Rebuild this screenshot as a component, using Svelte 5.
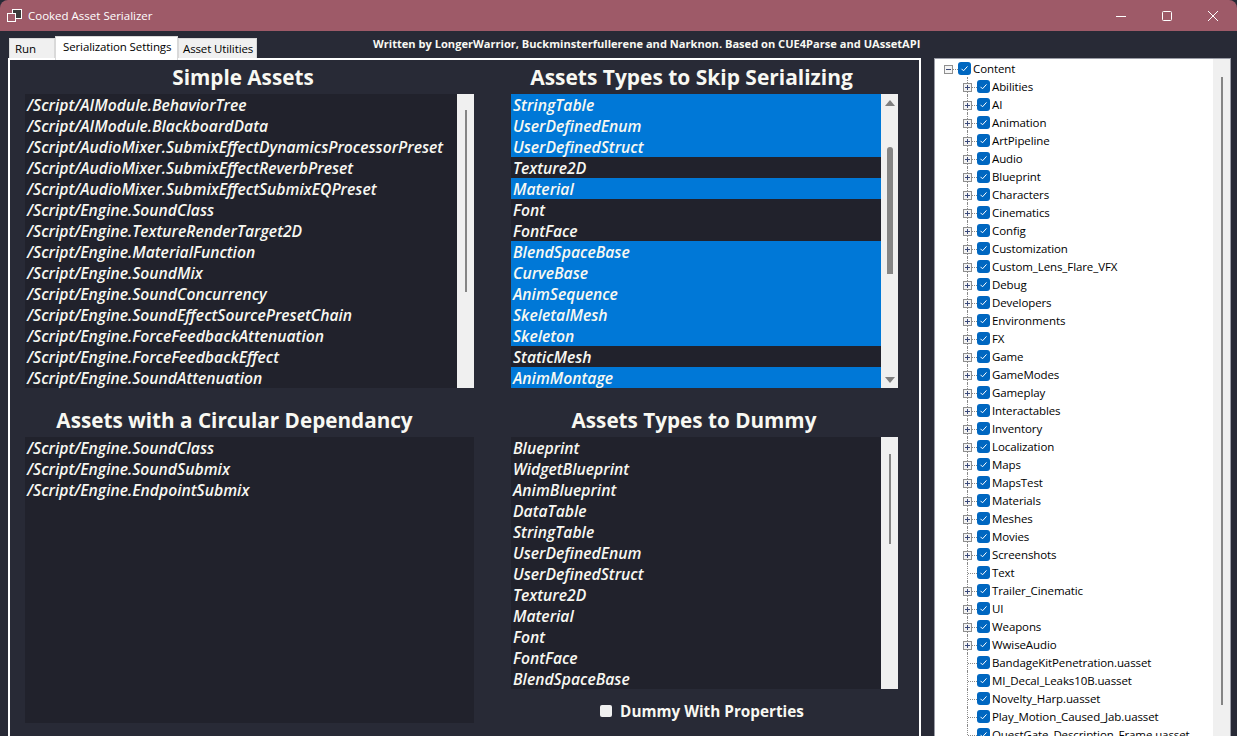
<script>
  const simple = [
    "/Script/AIModule.BehaviorTree",
    "/Script/AIModule.BlackboardData",
    "/Script/AudioMixer.SubmixEffectDynamicsProcessorPreset",
    "/Script/AudioMixer.SubmixEffectReverbPreset",
    "/Script/AudioMixer.SubmixEffectSubmixEQPreset",
    "/Script/Engine.SoundClass",
    "/Script/Engine.TextureRenderTarget2D",
    "/Script/Engine.MaterialFunction",
    "/Script/Engine.SoundMix",
    "/Script/Engine.SoundConcurrency",
    "/Script/Engine.SoundEffectSourcePresetChain",
    "/Script/Engine.ForceFeedbackAttenuation",
    "/Script/Engine.ForceFeedbackEffect",
    "/Script/Engine.SoundAttenuation"
  ];
  const circular = ["/Script/Engine.SoundClass", "/Script/Engine.SoundSubmix", "/Script/Engine.EndpointSubmix"];
  const skip = [
    ["StringTable", true],
    ["UserDefinedEnum", true],
    ["UserDefinedStruct", true],
    ["Texture2D", false],
    ["Material", true],
    ["Font", false],
    ["FontFace", false],
    ["BlendSpaceBase", true],
    ["CurveBase", true],
    ["AnimSequence", true],
    ["SkeletalMesh", true],
    ["Skeleton", true],
    ["StaticMesh", false],
    ["AnimMontage", true]
  ];
  const dummy = [
    "Blueprint", "WidgetBlueprint", "AnimBlueprint", "DataTable", "StringTable", "UserDefinedEnum",
    "UserDefinedStruct", "Texture2D", "Material", "Font", "FontFace", "BlendSpaceBase"
  ];
  const folders = [
    "Abilities", "AI", "Animation", "ArtPipeline", "Audio", "Blueprint", "Characters", "Cinematics", "Config",
    "Customization", "Custom_Lens_Flare_VFX", "Debug", "Developers", "Environments", "FX", "Game", "GameModes",
    "Gameplay", "Interactables", "Inventory", "Localization", "Maps", "MapsTest", "Materials", "Meshes", "Movies",
    "Screenshots", "Text", "Trailer_Cinematic", "UI", "Weapons", "WwiseAudio"
  ];
  const files = [
    "BandageKitPenetration.uasset", "MI_Decal_Leaks10B.uasset", "Novelty_Harp.uasset",
    "Play_Motion_Caused_Jab.uasset", "QuestGate_Description_Frame.uasset"
  ];
  const leaves = ["Text"];
</script>

<div class="window">
  <header class="titlebar">
    <svg class="app-icon" width="16" height="14" viewBox="0 0 16 14" fill="none" stroke="#fff" stroke-width="1">
      <rect x="6.5" y="0.5" width="9" height="9" fill="#3a3a3a" />
      <rect x="1.5" y="4.5" width="8" height="8" fill="#9e5a68" />
    </svg>
    <span class="app-title">Cooked Asset Serializer</span>
    <div class="controls">
      <svg width="12" height="12" viewBox="0 0 12 12" stroke="#fff" fill="none"><path d="M1 6.5h10" /></svg>
      <svg width="12" height="12" viewBox="0 0 12 12" stroke="#fff" fill="none"><rect x="1.5" y="1.5" width="9" height="9" rx="1" /></svg>
      <svg width="12" height="12" viewBox="0 0 12 12" stroke="#fff" fill="none"><path d="M1 1l10 10M11 1L1 11" /></svg>
    </div>
  </header>

  <div class="content">
    <div class="main">
      <div class="tabstrip">
        <button class="tab run">Run</button>
        <button class="tab settings active">Serialization Settings</button>
        <button class="tab utilities">Asset Utilities</button>
        <span class="credits">Written by LongerWarrior, Buckminsterfullerene and Narknon. Based on CUE4Parse and UAssetAPI</span>
      </div>

      <div class="panel">
        <section class="col">
          <h2 class="h-simple">Simple Assets</h2>
          <div class="list top">
            <div class="rows">
              {#each simple as item}
                <div class="row">{item}</div>
              {/each}
            </div>
            <div class="scroll"><div class="thumb thin simple-thumb"></div></div>
          </div>
        </section>

        <section class="col">
          <h2 class="h-skip">Assets Types to Skip Serializing</h2>
          <div class="list top">
            <div class="rows">
              {#each skip as [name, selected]}
                <div class="row" class:selected>{name}</div>
              {/each}
            </div>
            <div class="scroll arrows">
              <svg class="arrow" width="10" height="6" viewBox="0 0 10 6"><path d="M5 0l5 6H0z" fill="#7f7f7f" /></svg>
              <div class="thumb wide"></div>
              <svg class="arrow" width="10" height="6" viewBox="0 0 10 6"><path d="M0 0h10L5 6z" fill="#7f7f7f" /></svg>
            </div>
          </div>
        </section>

        <section class="col lower">
          <h2 class="h-circular">Assets with a Circular Dependancy</h2>
          <div class="list circular">
            <div class="rows">
              {#each circular as item}
                <div class="row">{item}</div>
              {/each}
            </div>
          </div>
        </section>

        <section class="col lower">
          <h2 class="h-dummy">Assets Types to Dummy</h2>
          <div class="list dummy">
            <div class="rows">
              {#each dummy as item}
                <div class="row">{item}</div>
              {/each}
            </div>
            <div class="scroll"><div class="thumb thin dummy-thumb"></div></div>
          </div>
          <label class="dummy-check">
            <span class="plain-box"></span>
            Dummy With Properties
          </label>
        </section>
      </div>
    </div>

    <aside class="tree">
      <div class="tree-rows">
        <div class="node root">
          <span class="twist root-twist"><span class="expander">
            <svg width="9" height="9" viewBox="0 0 9 9"><path d="M2 4.5h5" stroke="#3b4a7a" /></svg>
          </span></span>
          <span class="check"><svg width="13" height="13" viewBox="0 0 13 13"><path d="M3.5 6.8l2 2 4-4.4" stroke="#fff" stroke-width="1" fill="none" /></svg></span>
          <span>Content</span>
        </div>
        {#each folders as name}
          <div class="node">
            <span class="twist">
              {#if !leaves.includes(name)}
                <span class="expander">
                  <svg width="9" height="9" viewBox="0 0 9 9"><path d="M2 4.5h5M4.5 2v5" stroke="#3b4a7a" /></svg>
                </span>
              {/if}
            </span>
            <span class="check"><svg width="13" height="13" viewBox="0 0 13 13"><path d="M3.5 6.8l2 2 4-4.4" stroke="#fff" stroke-width="1" fill="none" /></svg></span>
            <span>{name}</span>
          </div>
        {/each}
        {#each files as name}
          <div class="node">
            <span class="twist"></span>
            <span class="check"><svg width="13" height="13" viewBox="0 0 13 13"><path d="M3.5 6.8l2 2 4-4.4" stroke="#fff" stroke-width="1" fill="none" /></svg></span>
            <span>{name}</span>
          </div>
        {/each}
      </div>
      <div class="tree-scroll"><div class="tree-thumb"></div></div>
    </aside>
  </div>
</div>

<style>
  :global(body) {
    margin: 0;
    background: #282a36;
    overflow: hidden;
  }

  .window {
    width: 1237px;
    height: 736px;
    overflow: hidden;
    background: #282a36;
    font-family: "Open Sans", "Noto Sans", sans-serif;
    color: #f8f8f2;
  }

  .titlebar {
    height: 31px;
    background: #9e5a68;
    border-radius: 8px 8px 0 0;
    display: flex;
    align-items: center;
    padding-left: 6px;
    color: #fff;
    font-size: 11.5px;
  }

  .app-icon {
    margin-right: 6px;
  }

  .controls {
    margin-left: auto;
    display: flex;
    gap: 34px;
    padding-right: 18px;
  }

  .content {
    display: flex;
    height: 705px;
  }

  .main {
    width: 921px;
    padding-left: 8px;
    box-sizing: border-box;
  }

  .tabstrip {
    display: flex;
    align-items: flex-end;
    height: 27px;
    padding-left: 1px;
    position: relative;
    z-index: 1;
  }

  .tab {
    height: 20px;
    box-sizing: border-box;
    border: 1px solid #d9d9d9;
    border-bottom: none;
    background: #f0f0f0;
    color: #000;
    font: 11.5px "Open Sans", sans-serif;
    letter-spacing: -0.12px;
    padding: 0 0 0 5px;
    margin: 0;
    text-align: left;
    white-space: nowrap;
  }

  .tab.run {
    width: 46px;
  }

  .tab.settings {
    width: 123px;
    padding-left: 7px;
  }

  .tab.utilities {
    width: 79px;
    padding-left: 4px;
  }

  .tab.active {
    height: 24px;
    background: #fff;
    margin-bottom: -2px;
    padding-bottom: 5px;
  }

  .credits {
    align-self: flex-start;
    margin: 5px 0 0 116px;
    font-size: 11.1px;
    font-weight: 700;
    white-space: nowrap;
  }

  .panel {
    height: 690px;
    box-sizing: border-box;
    border: 2px solid #fff;
    border-bottom: none;
    padding: 0 21px 0 15px;
    display: grid;
    grid-template-columns: 449px 387px;
    grid-template-rows: 328px 1fr;
    column-gap: 37px;
  }

  h2 {
    margin: 0;
    height: 34px;
    box-sizing: border-box;
    line-height: 34px;
    text-align: center;
    font-size: 20.7px;
    font-weight: 700;
    white-space: nowrap;
  }

  .h-simple {
    padding-right: 13px;
  }

  .h-skip {
    padding-right: 26px;
    font-size: 20.95px;
  }

  .h-circular {
    padding-right: 30px;
  }

  .h-dummy {
    padding-right: 21px;
  }

  .lower h2 {
    margin-top: 15px;
  }

  .list {
    display: flex;
    background: #21222c;
    overflow: hidden;
  }

  .rows {
    flex: 1;
    min-width: 0;
  }

  .list.top {
    height: 294px;
  }

  .list.circular {
    height: 286px;
  }

  .list.dummy {
    height: 252px;
  }

  .row {
    height: 21px;
    line-height: 23px;
    padding-left: 2px;
    font-size: 15.7px;
    font-style: italic;
    font-weight: 600;
    white-space: nowrap;
    overflow: hidden;
  }

  .row.selected {
    background: #0078d7;
  }

  .scroll {
    width: 17px;
    flex: none;
    background: #f0f0f0;
    display: flex;
    flex-direction: column;
    align-items: center;
  }

  .arrows {
    justify-content: flex-start;
  }

  .arrow {
    margin: 6px 0;
    flex: none;
  }

  .thumb {
    background: #858585;
    flex: none;
  }

  .thumb.thin {
    width: 2px;
  }

  .simple-thumb {
    height: 182px;
    margin-top: 16px;
  }

  .dummy-thumb {
    height: 90px;
    margin-top: 17px;
  }

  .thumb.wide {
    width: 6px;
    height: 127px;
    margin-top: 35px;
    margin-bottom: 97px;
    border-radius: 3px 3px 0 0;
  }

  .dummy-check {
    display: flex;
    align-items: center;
    justify-content: center;
    gap: 8px;
    height: 44px;
    padding-right: 5px;
    font-size: 15.3px;
    font-weight: 700;
  }

  .plain-box {
    width: 12px;
    height: 12px;
    background: #f0f0f0;
    border-radius: 2px;
  }

  .tree {
    margin: 27px 6px 0 13px;
    flex: 1;
    background: #fff;
    border: 1px solid #9a9ca6;
    border-bottom: none;
    display: flex;
    color: #000;
    font-size: 11.5px;
    letter-spacing: -0.1px;
    overflow: hidden;
  }

  .tree-rows {
    flex: 1;
    min-width: 0;
    overflow: hidden;
  }

  .node {
    display: flex;
    align-items: center;
    height: 18px;
    padding-left: 23px;
    white-space: nowrap;
  }

  .node.root {
    padding-left: 4px;
  }

  .twist {
    position: relative;
    width: 19px;
    height: 18px;
    flex: none;
  }

  .twist::before {
    content: "";
    position: absolute;
    left: 9px;
    top: 0;
    bottom: 0;
    border-left: 1px dotted #8a8a8a;
  }

  .twist::after {
    content: "";
    position: absolute;
    left: 10px;
    width: 9px;
    top: 10px;
    border-top: 1px dotted #8a8a8a;
  }

  .root-twist::before {
    display: none;
  }

  .expander {
    position: absolute;
    z-index: 1;
    left: 5px;
    top: 6px;
    width: 9px;
    height: 9px;
    box-sizing: border-box;
    border: 1px solid #8f8f8f;
    background: #f4f4f4;
    display: flex;
    align-items: center;
    justify-content: center;
  }

  .expander svg {
    flex: none;
  }

  .check {
    width: 13px;
    height: 13px;
    background: #0067c0;
    border-radius: 3px;
    margin-right: 2px;
    flex: none;
    display: block;
  }

  .check svg {
    display: block;
  }

  .tree-scroll {
    width: 17px;
    flex: none;
    background: #f0f0f0;
    display: flex;
    justify-content: center;
  }

  .tree-thumb {
    width: 2px;
    height: 628px;
    margin-top: 18px;
    background: #858585;
  }
</style>
